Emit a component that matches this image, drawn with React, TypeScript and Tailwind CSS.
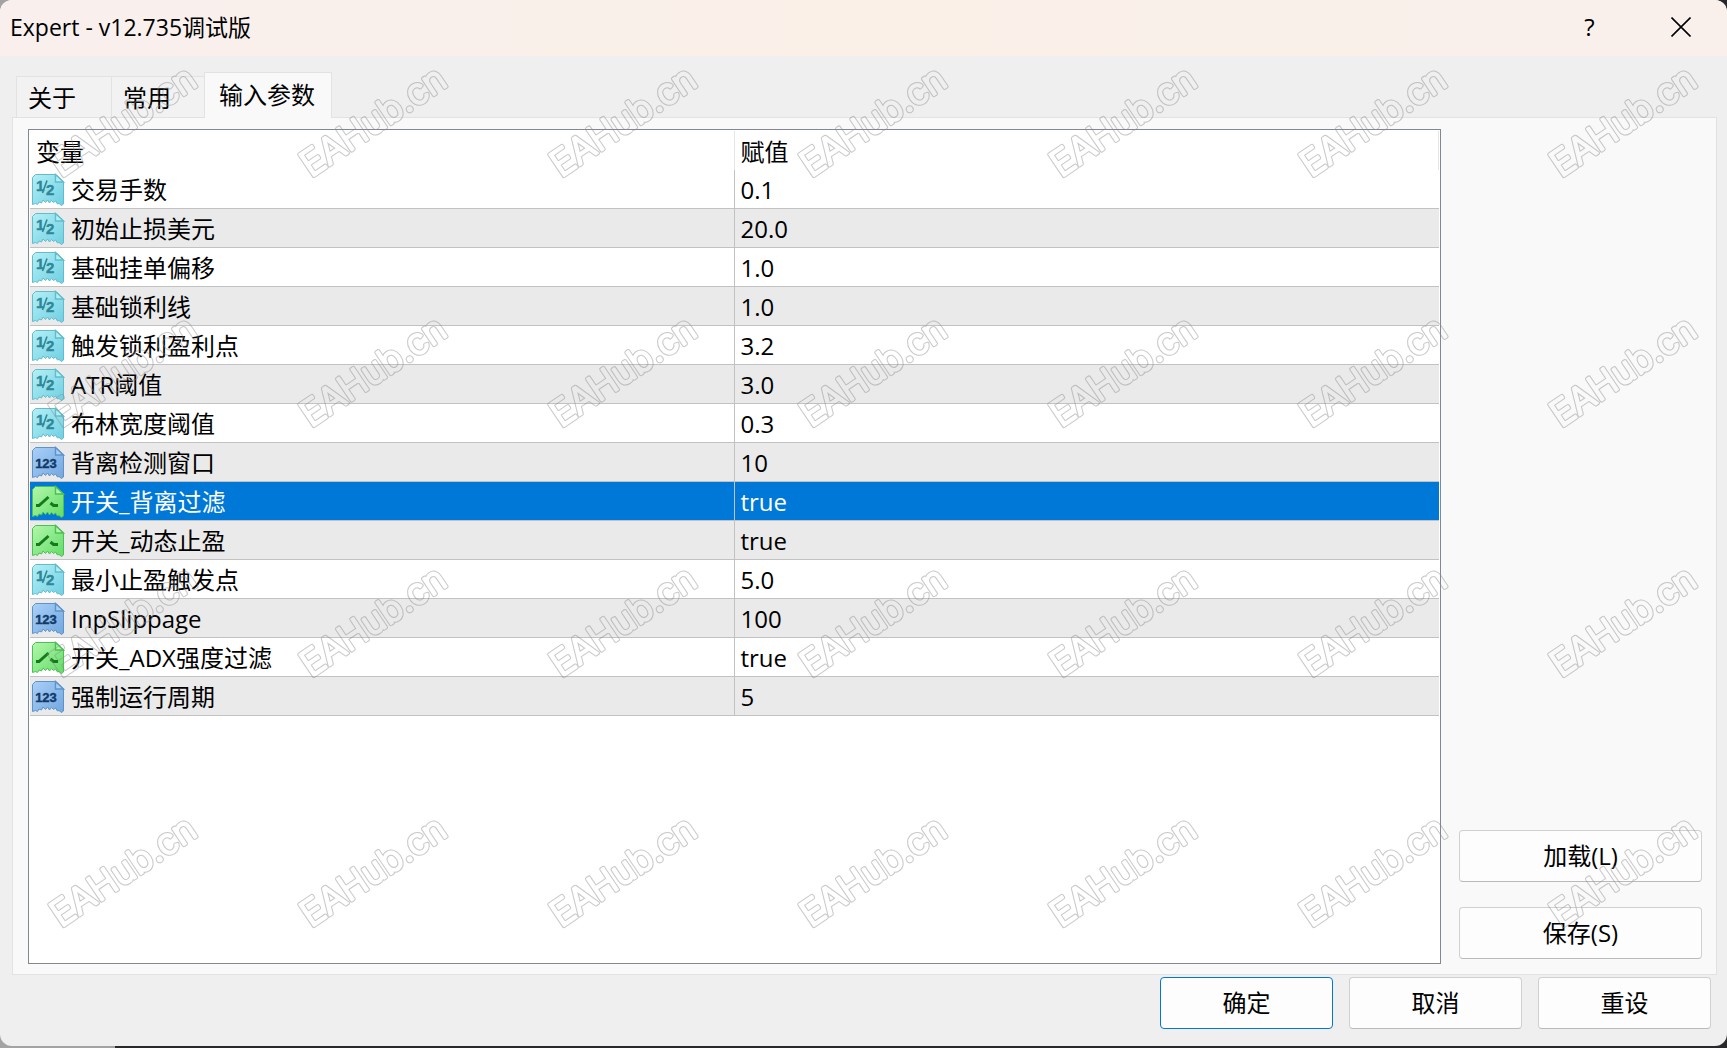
import React, { useState } from 'react';

type ParamType = 'double' | 'int' | 'bool';

interface Param {
  name: string;
  value: string;
  type: ParamType;
}

const params: Param[] = [
  { name: '交易手数', value: '0.1', type: 'double' },
  { name: '初始止损美元', value: '20.0', type: 'double' },
  { name: '基础挂单偏移', value: '1.0', type: 'double' },
  { name: '基础锁利线', value: '1.0', type: 'double' },
  { name: '触发锁利盈利点', value: '3.2', type: 'double' },
  { name: 'ATR阈值', value: '3.0', type: 'double' },
  { name: '布林宽度阈值', value: '0.3', type: 'double' },
  { name: '背离检测窗口', value: '10', type: 'int' },
  { name: '开关_背离过滤', value: 'true', type: 'bool' },
  { name: '开关_动态止盈', value: 'true', type: 'bool' },
  { name: '最小止盈触发点', value: '5.0', type: 'double' },
  { name: 'InpSlippage', value: '100', type: 'int' },
  { name: '开关_ADX强度过滤', value: 'true', type: 'bool' },
  { name: '强制运行周期', value: '5', type: 'int' },
];

const palette = {
  double: { light: '#b4f0f6', dark: '#6fcfe2', edge: '#62bccb', ink: '#2f8798' },
  int: { light: '#a9d0f8', dark: '#72a7df', edge: '#5f93c8', ink: '#123a66' },
  bool: { light: '#b2f7ac', dark: '#62dc66', edge: '#4cc052', ink: '#147a1c' },
};

function TypeIcon({ type }: { type: ParamType }) {
  const c = palette[type];
  const id = `paper-${type}`;
  return (
    <svg width="34" height="34" viewBox="0 0 34 34" className="shrink-0" aria-hidden="true">
      <defs>
        <linearGradient id={id} x1="0" y1="0" x2="1" y2="1">
          <stop offset="0" stopColor={c.light} />
          <stop offset="1" stopColor={c.dark} />
        </linearGradient>
      </defs>
      <path
        d="M4.5 1.5H25L32.5 9V31L30.5 32.5L28 30.5L26.5 31L24.5 28L22.5 29.5L20.5 27.5L18.5 30L16.5 27L14.5 29.5L12 27L10.5 30L8 29L6.5 31.5L4.5 30.5L1.5 31.5V4.5L4.5 1.5Z"
        fill={`url(#${id})`}
        stroke={c.edge}
      />
      <path d="M24.5 1.5V9H32.5Z" fill={c.light} stroke={c.edge} strokeWidth="1.4" />
      {type === 'double' && (
        <g fill={c.ink} stroke={c.ink} strokeWidth="0.4" fontFamily="Liberation Sans, sans-serif" fontWeight="bold">
          <text x="5" y="18" fontSize="15">1</text>
          <path d="M11.5 20L16 7.5" strokeWidth="1.6" />
          <text x="15" y="22" fontSize="15">2</text>
        </g>
      )}
      {type === 'int' && (
        <text x="15" y="22" fontSize="13" textAnchor="middle" fill={c.ink} stroke={c.ink} strokeWidth="0.4" fontFamily="Liberation Sans, sans-serif" fontWeight="bold">
          123
        </text>
      )}
      {type === 'bool' && (
        <path d="M5 20.5H8L17.5 12M19.5 18L22.5 20.5H27" fill="none" stroke={c.ink} strokeWidth="3" />
      )}
    </svg>
  );
}

function Watermark() {
  return (
    <svg className="pointer-events-none absolute inset-0 h-full w-full" aria-hidden="true">
      <defs>
        <mask id="wm-outline" maskUnits="userSpaceOnUse" x="0" y="0" width="250" height="250">
          <g
            transform="translate(61 178) rotate(-34)"
            fontFamily="Inter, Liberation Sans, sans-serif"
            fontWeight="300"
            fontSize="36"
            strokeLinejoin="round"
          >
            <text fill="white" stroke="white" strokeWidth="4">EAHub.cn</text>
            <text fill="black" stroke="black" strokeWidth="2">EAHub.cn</text>
          </g>
        </mask>
        <pattern id="wm-tile" width="250" height="250" patternUnits="userSpaceOnUse">
          <rect width="250" height="250" fill="#888888" fillOpacity="0.45" mask="url(#wm-outline)" />
        </pattern>
      </defs>
      <rect width="100%" height="100%" fill="url(#wm-tile)" />
    </svg>
  );
}

interface DialogButtonProps {
  label: string;
  primary?: boolean;
  wide?: boolean;
}

function DialogButton({ label, primary, wide }: DialogButtonProps) {
  return (
    <button
      className={`h-[52px] rounded border bg-[#fdfdfd] text-2xl ${wide ? 'w-full' : 'w-[173px]'} ${
        primary ? 'border-[#0078d4]' : 'border-[#d0d0d0] border-b-[#bababa]'
      }`}
    >
      {label}
    </button>
  );
}

export default function App() {
  const [activeTab, setActiveTab] = useState('inputs');
  const [selected, setSelected] = useState(8);

  return (
    <div className="relative flex min-h-screen flex-col bg-[linear-gradient(to_right,#a3a3a3_115px,#29292c_115px)] pb-[2px] font-['Open_Sans','Noto_Sans_CJK_SC',sans-serif] text-black">
      <div className="flex flex-1 flex-col overflow-hidden rounded-xl bg-[#efefef]">
        {/* Title bar */}
        <header className="flex h-14 items-center justify-between bg-linear-to-r from-[#f9f0ee] via-[#faf0e8] to-[#f9f0ec] pb-[2px] pl-[10px]">
          <h1 className="text-[23px] leading-8">Expert - v12.735调试版</h1>
          <div className="flex h-full pr-px">
            <button className="w-[91px] text-2xl font-medium" aria-label="帮助">?</button>
            <button className="flex w-[91px] items-center justify-center" aria-label="关闭">
              <svg width="20" height="20" viewBox="0 0 20 20" fill="none" stroke="black" strokeWidth="1.6">
                <path d="M0.5 0.5L19.5 19.5M19.5 0.5L0.5 19.5" />
              </svg>
            </button>
          </div>
        </header>

        {/* Tabs */}
        <div role="tablist" className="flex items-end px-4 pt-4">
          {[
            { id: 'about', label: '关于', width: 'w-[95px]' },
            { id: 'common', label: '常用', width: 'w-[93px]' },
            { id: 'inputs', label: '输入参数', width: 'w-[128px]' },
          ].map((tab) => (
            <button
              key={tab.id}
              role="tab"
              aria-selected={activeTab === tab.id}
              onClick={() => setActiveTab(tab.id)}
              className={`border border-b-0 border-[#e2e2e2] text-left text-2xl ${tab.width} ${
                activeTab === tab.id
                  ? 'z-10 -mb-px h-[46px] bg-[#f9f9f9] pb-[2px] pl-[14px]'
                  : 'h-[41px] border-r-0 bg-[#f2f2f2] pt-[2px] pl-[11px]'
              }`}
            >
              {tab.label}
            </button>
          ))}
        </div>

        <main className="mx-3 mr-[10px] flex flex-1 gap-[18px] border border-[#e2e2e2] bg-[#f9f9f9] pt-[11px] pr-[14px] pb-[10px] pl-[15px]">
          <div className="flex-1 border border-[#828790] bg-white p-px">
            <table className="w-full table-fixed border-separate border-spacing-0 text-left text-2xl leading-8">
              <thead>
                <tr className="h-[39px]">
                  <th className="w-1/2 border-r border-[#e5e5e5] p-0 pt-[2px] pl-[6px] font-normal">变量</th>
                  <th className="w-1/2 border-r border-[#e5e5e5] p-0 pt-[2px] pl-[6px] font-normal">赋值</th>
                </tr>
              </thead>
              <tbody>
                {params.map((param, i) => (
                  <tr
                    key={param.name}
                    onClick={() => setSelected(i)}
                    className={`h-[39px] ${
                      i === selected ? 'bg-[#0078d7] text-white' : i % 2 ? 'bg-[#eaeaea]' : 'bg-white'
                    }`}
                  >
                    <td className="border-r border-b border-[#c2c2c2] p-0 pt-[2px] pl-px">
                      <div className="flex items-center gap-[6px]">
                        <TypeIcon type={param.type} />
                        {param.name}
                      </div>
                    </td>
                    <td className="border-b border-[#c2c2c2] p-0 pt-[2px] pl-[6px]">{param.value}</td>
                  </tr>
                ))}
              </tbody>
            </table>
          </div>

          <div className="flex w-[243px] flex-col justify-end gap-[25px] pb-[5px]">
            <DialogButton label="加载(L)" wide />
            <DialogButton label="保存(S)" wide />
          </div>
        </main>

        <footer className="flex justify-end gap-4 px-4 pt-[2px] pb-[17px]">
          <DialogButton label="确定" primary />
          <DialogButton label="取消" />
          <DialogButton label="重设" />
        </footer>
      </div>
      <Watermark />
    </div>
  );
}
